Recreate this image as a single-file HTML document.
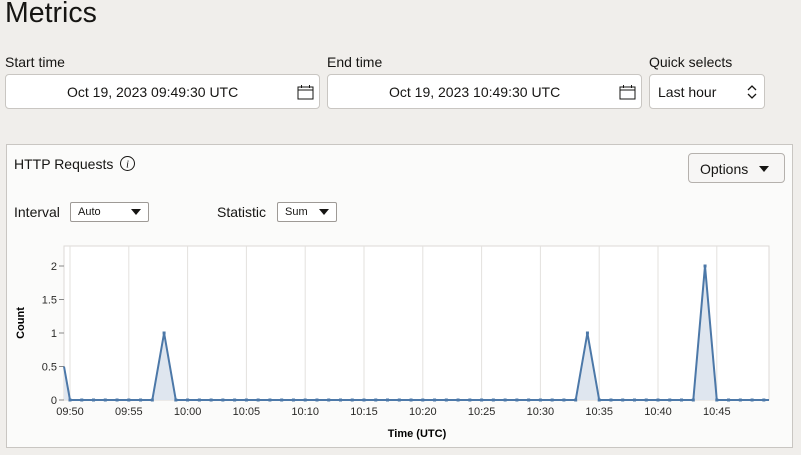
<!DOCTYPE html>
<html><head><style>
body{margin:0;width:801px;height:455px;background:#f0eeeb;font-family:"Liberation Sans",sans-serif;color:#161513;position:relative;overflow:hidden}
.a{position:absolute}
h1{position:absolute;left:5px;top:-3px;margin:0;font-weight:normal;font-size:28.5px}
.lbl{font-size:14px}
.box{position:absolute;background:#fff;border:1px solid #c9c6c2;border-radius:4px;box-sizing:border-box;font-size:14px}
.sel{position:absolute;background:#fff;border:1px solid #9e9a96;border-radius:2px;box-sizing:border-box;font-size:11px;padding:3px 0 0 7px;height:20px}
.tri{position:absolute;width:0;height:0;border-left:5px solid transparent;border-right:5px solid transparent;border-top:6px solid #161513}
</style></head><body>
<h1>Metrics</h1>
<div class="a lbl" style="left:5px;top:54px">Start time</div>
<div class="a lbl" style="left:327px;top:54px">End time</div>
<div class="a lbl" style="left:649px;top:54px">Quick selects</div>
<div class="box" style="left:5px;top:74px;width:315px;height:35px"><span class="a" style="left:61px;top:9px">Oct 19, 2023 09:49:30 UTC</span>
<svg class="a" style="left:291px;top:9px" width="17" height="16"><rect x="1" y="3" width="15" height="12" fill="none" stroke="#161513"/><line x1="1" y1="6" x2="16" y2="6" stroke="#161513"/><line x1="4.5" y1="1" x2="4.5" y2="4" stroke="#161513"/><line x1="12.5" y1="1" x2="12.5" y2="4" stroke="#161513"/></svg></div>
<div class="box" style="left:327px;top:74px;width:315px;height:35px"><span class="a" style="left:61px;top:9px">Oct 19, 2023 10:49:30 UTC</span>
<svg class="a" style="left:291px;top:9px" width="17" height="16"><rect x="1" y="3" width="15" height="12" fill="none" stroke="#161513"/><line x1="1" y1="6" x2="16" y2="6" stroke="#161513"/><line x1="4.5" y1="1" x2="4.5" y2="4" stroke="#161513"/><line x1="12.5" y1="1" x2="12.5" y2="4" stroke="#161513"/></svg></div>
<div class="box" style="left:649px;top:74px;width:116px;height:35px"><span class="a" style="left:8px;top:9px">Last hour</span>
<svg class="a" style="left:96px;top:9px" width="12" height="16"><path d="M2 6 L6 2 L10 6 M2 10 L6 14 L10 10" fill="none" stroke="#161513" stroke-width="1.3"/></svg></div>

<div class="a" style="left:6px;top:144px;width:787px;height:304px;background:#fbfbfa;border:1px solid #c9c6c2;box-sizing:border-box"></div>
<div class="a lbl" style="left:14px;top:156px">HTTP Requests</div>
<svg class="a" style="left:119px;top:155px" width="17" height="17"><circle cx="8.5" cy="8.5" r="7" fill="none" stroke="#161513"/><text x="8.5" y="12.5" font-size="10" font-style="italic" text-anchor="middle" font-family="Liberation Serif">i</text></svg>
<div class="box" style="left:688px;top:153px;width:97px;height:30px;background:#f7f6f5;border-color:#b5b1ad"><span class="a" style="left:11px;top:7px">Options</span><div class="tri" style="left:70px;top:12px"></div></div>
<div class="a lbl" style="left:14px;top:204px">Interval</div>
<div class="sel" style="left:70px;top:202px;width:79px">Auto<div class="tri" style="left:60px;top:6px"></div></div>
<div class="a lbl" style="left:217px;top:204px">Statistic</div>
<div class="sel" style="left:277px;top:202px;width:60px">Sum<div class="tri" style="left:41px;top:6px"></div></div>

<svg id="c" class="a" style="left:0;top:0" width="801" height="455"></svg>
<script>
var s='<rect x="64" y="246" width="705" height="154" fill="#fff" stroke="#dcdad7"/>';
var lab=["09:50","09:55","10:00","10:05","10:10","10:15","10:20","10:25","10:30","10:35","10:40","10:45"];
for(var i=0;i<12;i++){var x=70+i*58.8;s+='<line x1="'+x+'" y1="246" x2="'+x+'" y2="400" stroke="#e3e1de"/><text x="'+x+'" y="415" font-size="11" text-anchor="middle" fill="#2b2a28" font-family="Liberation Sans">'+lab[i]+'</text>';}
var yl=["0","0.5","1","1.5","2"];
for(var j=0;j<5;j++){var y=400-j*33.5;s+='<line x1="59" y1="'+y+'" x2="64" y2="'+y+'" stroke="#888"/><text x="57" y="'+(y+4)+'" font-size="11" text-anchor="end" fill="#2b2a28" font-family="Liberation Sans">'+yl[j]+'</text>';}
s+='<text x="417" y="437" font-size="11" font-weight="bold" text-anchor="middle" font-family="Liberation Sans">Time (UTC)</text>';
s+='<text transform="translate(24,323) rotate(-90)" font-size="11" font-weight="bold" text-anchor="middle" font-family="Liberation Sans">Count</text>';
var pts=[[64,366.5]];var marks='';
for(var k=0;k<60;k++){var x=70+k*11.76;var v=0;if(k==8||k==44)v=1;if(k==54)v=2;var y=400-v*67;pts.push([x,y]);marks+='<rect x="'+(x-1.5)+'" y="'+(y-1.5)+'" width="3" height="3" fill="#4c78a8"/>';}
pts.push([769,400]);
var p=pts.map(function(q){return q[0].toFixed(1)+','+q[1]}).join(' ');
s+='<polygon points="64,400 '+p+' 769,400" fill="#dfe6ef"/>';
s+='<polyline points="'+p+'" fill="none" stroke="#4c78a8" stroke-width="2"/>'+marks;
document.getElementById('c').innerHTML=s;
</script>
</body></html>
